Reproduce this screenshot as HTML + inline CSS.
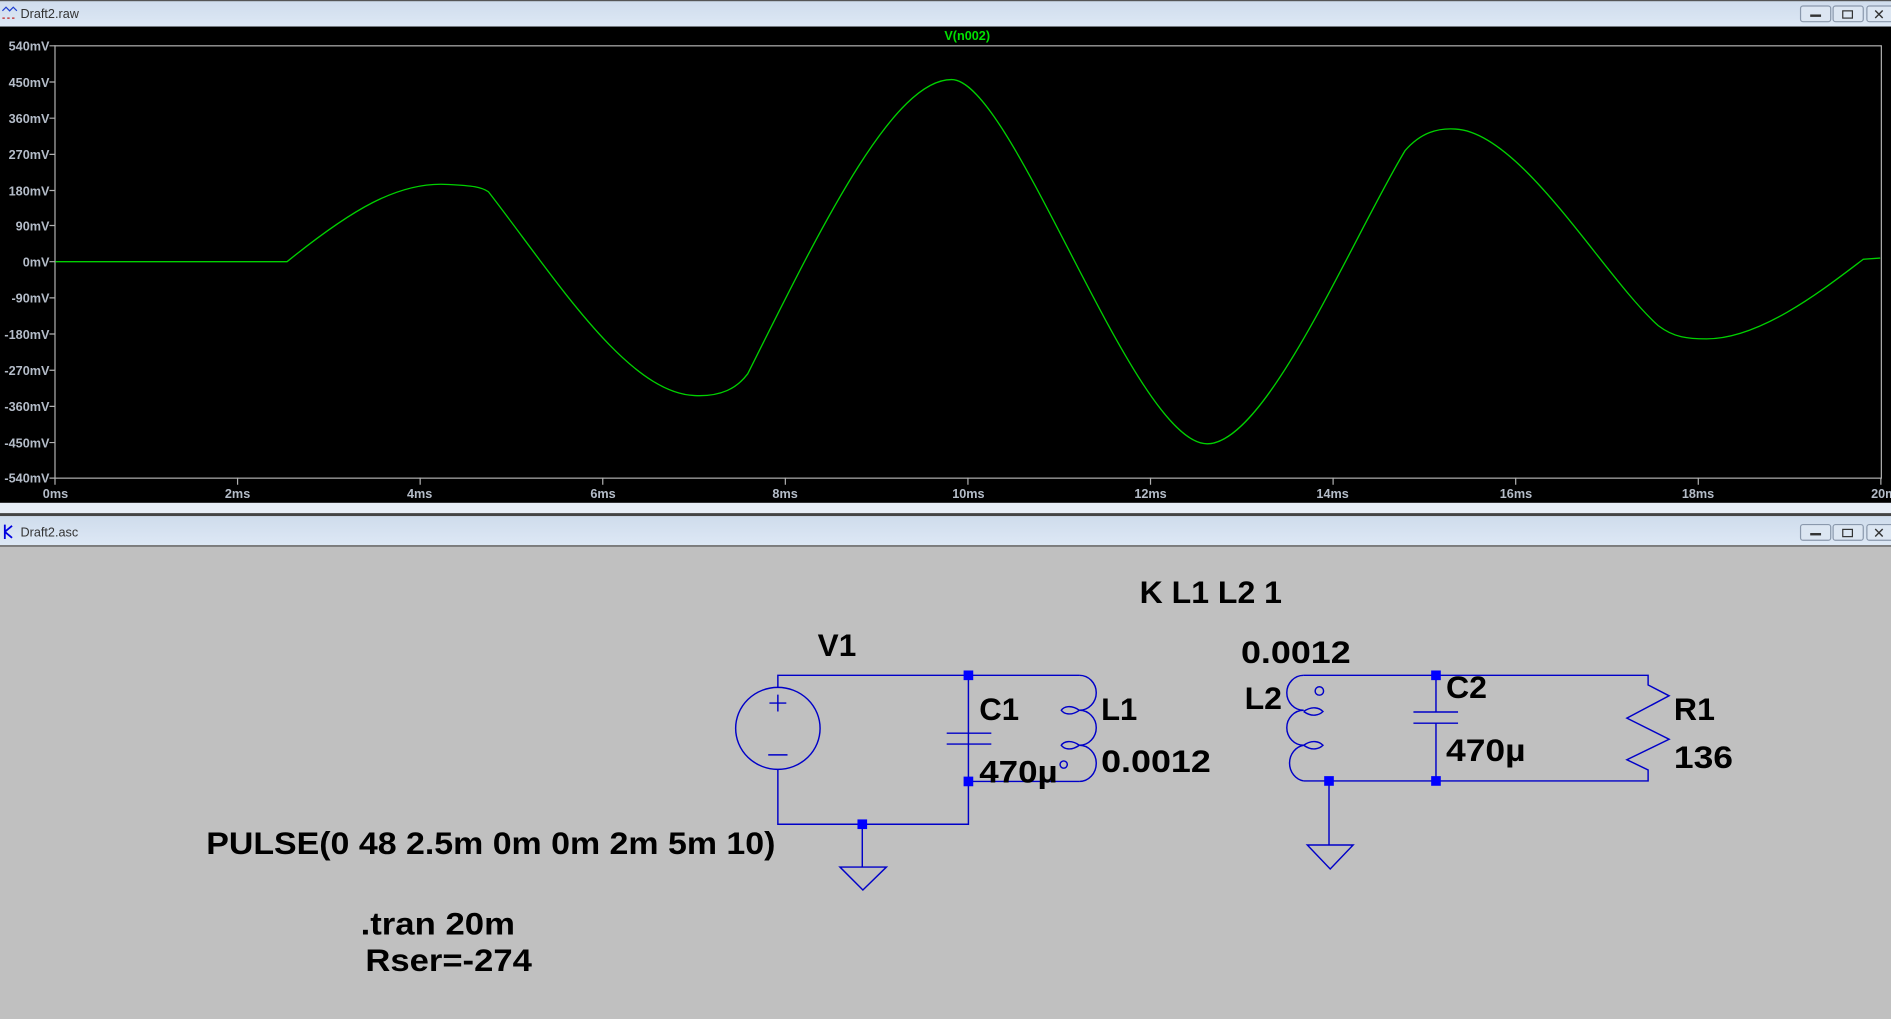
<!DOCTYPE html>
<html><head><meta charset="utf-8"><style>
html,body{margin:0;padding:0;background:#c0c0c0;overflow:hidden}
svg{display:block}
.t{font-family:"Liberation Sans",sans-serif;font-weight:bold;font-size:26px;fill:#000}
.ax{font-family:"Liberation Sans",sans-serif;font-weight:bold;font-size:10.5px;fill:#b4bcc8}
.w{stroke:#0000c8;stroke-width:1.2;fill:none}
</style></head><body>
<svg width="1891" height="1019" viewBox="0 0 1568 845" preserveAspectRatio="none" xmlns="http://www.w3.org/2000/svg">
<defs><linearGradient id="tb" x1="0" y1="0" x2="0" y2="1"><stop offset="0" stop-color="#cfdcec"/><stop offset="1" stop-color="#dde8f5"/></linearGradient></defs>
<rect width="1568" height="845" fill="#c0c0c0"/>
<rect x="0" y="0" width="1568" height="22" fill="url(#tb)"/>
<rect x="0" y="0" width="1568" height="1" fill="#555"/>
<text x="17" y="15" font-family="Liberation Sans,sans-serif" font-size="10.5" fill="#333">Draft2.raw</text>
<path d="M2,9 l3,-3 3,3 3,-3 3,3" stroke="#2040d0" fill="none"/><path d="M2,15 h12" stroke="#c02020" stroke-dasharray="2,2"/>
<g fill="#dce6f2" stroke="#8a98ac"><rect x="1493" y="5" width="25" height="13" rx="2"/><rect x="1520" y="5" width="25" height="13" rx="2"/><rect x="1548" y="5" width="22" height="13" rx="2"/></g>
<rect x="1501" y="12" width="9" height="2" fill="#333"/><rect x="1528" y="9" width="8" height="6" fill="none" stroke="#333"/><text x="1553" y="16" font-family="Liberation Sans,sans-serif" font-size="12" fill="#333">✕</text>
<rect x="0" y="22" width="1568" height="395" fill="#000"/>
<rect x="45.6" y="38" width="1514.4" height="358.5" fill="none" stroke="#b0b0b0" stroke-width="1"/>
<text x="802" y="33" text-anchor="middle" font-family="Liberation Sans,sans-serif" font-weight="bold" font-size="10.5" fill="#00e000">V(n002)</text>
<g class="ax" text-anchor="end">
<text x="41" y="42">540mV</text><text x="41" y="72">450mV</text><text x="41" y="102">360mV</text><text x="41" y="132">270mV</text><text x="41" y="162">180mV</text><text x="41" y="191">90mV</text><text x="41" y="221">0mV</text><text x="41" y="251">-90mV</text><text x="41" y="281">-180mV</text><text x="41" y="311">-270mV</text><text x="41" y="341">-360mV</text><text x="41" y="371">-450mV</text><text x="41" y="400">-540mV</text>
</g>
<g stroke="#b0b0b0"><path d="M41,38h5M41,68h5M41,98h5M41,128h5M41,158h5M41,187h5M41,217h5M41,247h5M41,277h5M41,307h5M41,337h5M41,367h5M41,396.5h5"/>
<path d="M45.6,396v6M197,396v6M348.4,396v6M499.8,396v6M651.2,396v6M802.6,396v6M954,396v6M1105.4,396v6M1256.8,396v6M1408.2,396v6M1559.6,396v6"/></g>
<g class="ax" text-anchor="middle"><text x="46" y="413">0ms</text><text x="197" y="413">2ms</text><text x="348" y="413">4ms</text><text x="500" y="413">6ms</text><text x="651" y="413">8ms</text><text x="803" y="413">10ms</text><text x="954" y="413">12ms</text><text x="1105" y="413">14ms</text><text x="1257" y="413">16ms</text><text x="1408" y="413">18ms</text><text x="1562" y="413">20m</text></g>
<path d="M46,217 L238,217 C290,175 330,150 372,153 C392,154 399,155 405,159 C460,230 520,326 576,328 C598,329 611,322 620,310 C680,190 740,66 789,66 C840,66 940,368 1001,368 C1050,368 1120,200 1165,125 C1178,110 1192,106 1207,107 C1262,110 1330,230 1375,270 C1388,280 1400,281 1415,281 C1460,281 1512,240 1545,215 L1559,214" fill="none" stroke="#00d000" stroke-width="1.1"/>
<rect x="0" y="417" width="1568" height="9" fill="#e8eef6"/>
<rect x="0" y="425.5" width="1568" height="2.5" fill="#444"/>
<rect x="0" y="428" width="1568" height="24" fill="url(#tb)"/>
<rect x="0" y="452" width="1568" height="1.5" fill="#777"/>
<text x="17" y="445" font-family="Liberation Sans,sans-serif" font-size="10.5" fill="#333">Draft2.asc</text>
<path d="M4,435v12M4,441l6,-5M4,441l6,5" stroke="#0000e0" stroke-width="1.5" fill="none"/>
<g fill="#dce6f2" stroke="#8a98ac"><rect x="1493" y="435" width="25" height="13" rx="2"/><rect x="1520" y="435" width="25" height="13" rx="2"/><rect x="1548" y="435" width="22" height="13" rx="2"/></g>
<rect x="1501" y="442" width="9" height="2" fill="#333"/><rect x="1528" y="439" width="8" height="6" fill="none" stroke="#333"/><text x="1553" y="446" font-family="Liberation Sans,sans-serif" font-size="12" fill="#333">✕</text>
<g class="w">
<path d="M645,570V560H895M645,638V683.5H803V560M803,608V648H895M715,683.5V719M696.5,719H735L715.5,738Z"/>
<ellipse cx="645" cy="604" rx="35" ry="34"/>
<path d="M645,576v14M638,583h14M637,626h16"/>
<path d="M785,608h37M785,617h37"/>
<path d="M895,560 A14,14.5 0 0 1 895,589 A14,14.5 0 0 1 895,618 A14,15 0 0 1 895,648"/>
<path d="M895,589 C888,584 882,586 880,589 C882,592 888,594 895,589 M895,618 C888,613 882,615 880,618 C882,621 888,623 895,618"/>
<circle cx="882" cy="634" r="3"/>
<path d="M1081,560H1366.6V568L1384,577L1349,595.5L1384,613L1349,630L1366.6,638.5V647.6H1081M1190.7,560V590.4M1190.7,599.7V647.6M1172,590.4h37M1172,599.7h37M1102,647.6V700.7M1084,700.7H1122L1103,720.6Z"/>
<path d="M1081,560 A14,14.5 0 0 0 1081,589 A14,14.5 0 0 0 1081,618 A14,15 0 0 0 1081,647.6"/>
<path d="M1081,590 C1088,585 1094,587 1097,590 C1094,593 1088,595 1081,590 M1081,618 C1088,613 1094,615 1097,618 C1094,621 1088,623 1081,618"/>
<circle cx="1094" cy="573" r="3.5"/>
</g>
<g fill="#0000ff"><rect x="799" y="556" width="8" height="8"/><rect x="799" y="644" width="8" height="8"/><rect x="711" y="679.5" width="8" height="8"/><rect x="1186.7" y="556" width="8" height="8"/><rect x="1186.7" y="643.6" width="8" height="8"/><rect x="1098" y="643.6" width="8" height="8"/></g>
<g class="t">
<text x="945" y="500" textLength="118" lengthAdjust="spacingAndGlyphs">K L1 L2 1</text>
<text x="678" y="544" textLength="32" lengthAdjust="spacingAndGlyphs">V1</text>
<text x="1029" y="550" textLength="91" lengthAdjust="spacingAndGlyphs">0.0012</text>
<text x="1032" y="588" textLength="31" lengthAdjust="spacingAndGlyphs">L2</text>
<text x="812" y="597" textLength="33" lengthAdjust="spacingAndGlyphs">C1</text>
<text x="913" y="597" textLength="30" lengthAdjust="spacingAndGlyphs">L1</text>
<text x="1199" y="579" textLength="34" lengthAdjust="spacingAndGlyphs">C2</text>
<text x="1388" y="597" textLength="34" lengthAdjust="spacingAndGlyphs">R1</text>
<text x="812" y="649" textLength="65" lengthAdjust="spacingAndGlyphs">470µ</text>
<text x="913" y="640" textLength="91" lengthAdjust="spacingAndGlyphs">0.0012</text>
<text x="1199" y="631" textLength="66" lengthAdjust="spacingAndGlyphs">470µ</text>
<text x="1388" y="637" textLength="49" lengthAdjust="spacingAndGlyphs">136</text>
<text x="171" y="708" textLength="472" lengthAdjust="spacingAndGlyphs">PULSE(0 48 2.5m 0m 0m 2m 5m 10)</text>
<text x="299" y="775" textLength="128" lengthAdjust="spacingAndGlyphs">.tran 20m</text>
<text x="303" y="805" textLength="138" lengthAdjust="spacingAndGlyphs">Rser=-274</text>
</g>
</svg>
</body></html>
